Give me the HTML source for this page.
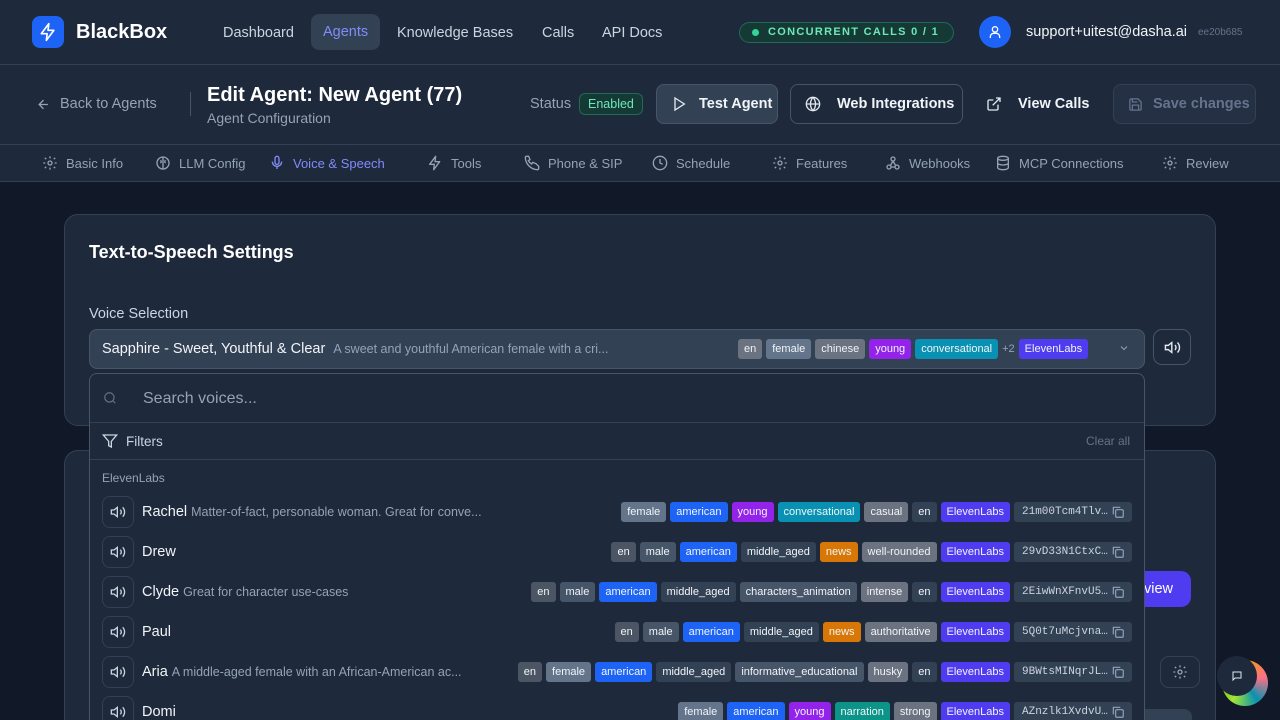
<!DOCTYPE html>
<html><head><meta charset="utf-8"><style>
*{box-sizing:border-box;margin:0;padding:0}
html,body{width:1280px;height:720px;overflow:hidden}
body{background:#111827;font-family:"Liberation Sans",sans-serif;color:#e2e8f0;position:relative}
.abs{position:absolute}
svg{display:block;flex-shrink:0}
.hdr{left:0;top:0;width:1280px;height:65px;background:#1e293b;border-bottom:1px solid #334155}
.sub{left:0;top:65px;width:1280px;height:80px;background:#1e293b;border-bottom:1px solid #334155}
.tabs{left:0;top:145px;width:1280px;height:37px;background:#1e293b;border-bottom:1px solid #334155}
.nav{top:14px;height:36px;line-height:36px;font-size:14.5px;color:#cbd5e1;padding:0 12px;border-radius:8px}
.tab{top:155px;font-size:13px;color:#94a3b8;display:flex;align-items:center;gap:8px;height:16px;white-space:nowrap}
.tab svg{width:16px;height:16px}
.btn{top:84px;height:40px;border-radius:8px;display:flex;align-items:center;gap:12px;font-size:14.5px;font-weight:bold;color:#f1f5f9;padding:0 14px;white-space:nowrap}
.card{background:#1e293b;border:1px solid #334155;border-radius:14px}
.tag{display:inline-block;height:20px;line-height:20px;padding:0 6px;border-radius:3px;font-size:11px;color:#f1f5f9;white-space:nowrap}
.g1{background:#64748b}.g2{background:#6b7280}.g3{background:#4b5563}.g4{background:#334155}.g5{background:#475569}
.am{background:#1d63f5}.yo{background:#9322ea}.co{background:#0891b2}.el{background:#4f3bf0}.nw{background:#d97706}.na{background:#0d9488}
.id{background:#334155;color:#cbd5e1;font-family:"Liberation Mono",monospace;font-size:11px;width:118px;height:20px;border-radius:3px;display:flex;align-items:center;padding-left:8px;gap:3px}
.row{left:90px;width:1054px;height:40px}
.spk{position:absolute;left:12px;top:4px;width:32px;height:32px;border:1px solid #334155;border-radius:8px;display:flex;align-items:center;justify-content:center}
.nm{position:absolute;left:52px;top:12px;font-size:14.5px;color:#f1f5f9;white-space:nowrap}
.nm span{font-size:12.5px;color:#94a3b8;margin-left:4px}
.tg{position:absolute;right:12px;top:10px;display:flex;gap:4px}
</style></head><body>
<div class="abs hdr"></div>
<div class="abs" style="left:32px;top:16px;width:32px;height:32px;border-radius:8px;background:#1d63f5;display:flex;align-items:center;justify-content:center"><svg width="20" height="20" viewBox="0 0 24 24" fill="none" stroke="#fff" stroke-width="2" stroke-linejoin="round"><path d="M13 2 4 14h7l-1 8 9-12h-7l1-8z"/></svg></div>
<div class="abs" style="left:76px;top:21px;font-size:20px;font-weight:bold;color:#fff">BlackBox</div>
<div class="abs nav" style="left:211px;top:15px">Dashboard</div>
<div class="abs nav" style="left:311px;top:14px;background:#334155;color:#818cf8">Agents</div>
<div class="abs nav" style="left:385px;top:15px">Knowledge Bases</div>
<div class="abs nav" style="left:530px;top:15px">Calls</div>
<div class="abs nav" style="left:590px;top:15px">API Docs</div>
<div class="abs" style="left:739px;top:22px;width:215px;height:21px;border-radius:11px;background:#153a36;border:1px solid #1f6b54;font-size:11px;letter-spacing:1.3px;color:#6ee7b7;line-height:19px;padding-left:28px;font-weight:bold;white-space:nowrap">CONCURRENT CALLS 0 / 1</div>
<div class="abs" style="left:752px;top:29px;width:7px;height:7px;border-radius:50%;background:#34d399"></div>
<div class="abs" style="left:979px;top:16px;width:32px;height:32px;border-radius:50%;background:#1d63f5;display:flex;align-items:center;justify-content:center"><svg width="16" height="16" viewBox="0 0 24 24" fill="none" stroke="#fff" stroke-width="2"><circle cx="12" cy="8" r="4"/><path d="M5 21v-2a5 5 0 0 1 5-5h4a5 5 0 0 1 5 5v2"/></svg></div>
<div class="abs" style="left:1026px;top:24px;font-size:14.5px;color:#f1f5f9">support+uitest@dasha.ai</div>
<div class="abs" style="left:1198px;top:27px;font-size:10px;color:#64748b">ee20b685</div>

<div class="abs sub"></div>
<div class="abs" style="left:36px;top:96px;display:flex;align-items:center;gap:9px;font-size:14.5px;color:#94a3b8"><svg width="15" height="15" viewBox="0 0 24 24" fill="none" stroke="#94a3b8" stroke-width="2"><path d="M19 12H5M12 19l-7-7 7-7"/></svg>Back to Agents</div>
<div class="abs" style="left:190px;top:92px;width:1px;height:24px;background:#475569"></div>
<div class="abs" style="left:207px;top:84px;font-size:20px;font-weight:bold;color:#fff">Edit Agent: New Agent (77)</div>
<div class="abs" style="left:207px;top:110px;font-size:14px;color:#94a3b8">Agent Configuration</div>
<div class="abs" style="left:530px;top:96px;font-size:14.5px;color:#94a3b8">Status</div>
<div class="abs" style="left:579px;top:93px;height:22px;line-height:20px;padding:0 8px;border-radius:6px;background:#153a36;border:1px solid #1f6b54;color:#6ee7b7;font-size:12.5px">Enabled</div>
<div class="abs btn" style="left:656px;width:122px;background:#334155;border:1px solid #475569"><svg width="16" height="16" viewBox="0 0 24 24" fill="none" stroke="#e2e8f0" stroke-width="2"><path d="M6 3l14 9-14 9z"/></svg>Test Agent</div>
<div class="abs btn" style="left:790px;width:173px;border:1px solid #475569;gap:16px"><svg width="16" height="16" viewBox="0 0 24 24" fill="none" stroke="#e2e8f0" stroke-width="2"><circle cx="12" cy="12" r="10"/><path d="M2 12h20M12 2a15 15 0 0 1 0 20M12 2a15 15 0 0 0 0 20"/></svg>Web Integrations</div>
<div class="abs btn" style="left:972px;gap:16px"><svg width="16" height="16" viewBox="0 0 24 24" fill="none" stroke="#e2e8f0" stroke-width="2"><path d="M18 13v6a2 2 0 0 1-2 2H5a2 2 0 0 1-2-2V8a2 2 0 0 1 2-2h6M15 3h6v6M10 14 21 3"/></svg>View Calls</div>
<div class="abs btn" style="left:1113px;width:143px;border:1px solid #334155;background:#243044;color:#64748b;gap:10px"><svg width="15" height="15" viewBox="0 0 24 24" fill="none" stroke="#64748b" stroke-width="2"><path d="M19 21H5a2 2 0 0 1-2-2V5a2 2 0 0 1 2-2h11l5 5v11a2 2 0 0 1-2 2z"/><path d="M17 21v-8H7v8M7 3v5h8"/></svg>Save changes</div>

<div class="abs tabs"></div>
<div class="abs tab" style="left:42px"><svg viewBox="0 0 24 24" fill="none" stroke="#94a3b8" stroke-width="2"><circle cx="12" cy="12" r="3"/><path d="M12 2v3M12 19v3M4.2 4.2l2.1 2.1M17.7 17.7l2.1 2.1M2 12h3M19 12h3M4.2 19.8l2.1-2.1M17.7 6.3l2.1-2.1"/></svg>Basic Info</div>
<div class="abs tab" style="left:155px"><svg viewBox="0 0 24 24" fill="none" stroke="#94a3b8" stroke-width="2"><circle cx="12" cy="12" r="9"/><path d="M12 3v18M8 8c2 1 2 3 0 4M16 8c-2 1-2 3 0 4"/></svg>LLM Config</div>
<div class="abs tab" style="left:269px;color:#818cf8"><svg viewBox="0 0 24 24" fill="none" stroke="#818cf8" stroke-width="2"><rect x="9" y="2" width="6" height="12" rx="3"/><path d="M5 10a7 7 0 0 0 14 0M12 17v4"/></svg>Voice &amp; Speech</div>
<div class="abs tab" style="left:427px"><svg viewBox="0 0 24 24" fill="none" stroke="#94a3b8" stroke-width="2" stroke-linejoin="round"><path d="M13 2 4 14h7l-1 8 9-12h-7l1-8z"/></svg>Tools</div>
<div class="abs tab" style="left:524px"><svg viewBox="0 0 24 24" fill="none" stroke="#94a3b8" stroke-width="2"><path d="M22 17v3a2 2 0 0 1-2 2A19 19 0 0 1 2 4a2 2 0 0 1 2-2h3l2 5-2.5 1.5a11 11 0 0 0 5 5L13 11l5 2z"/></svg>Phone &amp; SIP</div>
<div class="abs tab" style="left:652px"><svg viewBox="0 0 24 24" fill="none" stroke="#94a3b8" stroke-width="2"><circle cx="12" cy="12" r="10"/><path d="M12 6v6l4 2"/></svg>Schedule</div>
<div class="abs tab" style="left:772px"><svg viewBox="0 0 24 24" fill="none" stroke="#94a3b8" stroke-width="2"><circle cx="12" cy="12" r="3"/><path d="M12 2v3M12 19v3M4.2 4.2l2.1 2.1M17.7 17.7l2.1 2.1M2 12h3M19 12h3M4.2 19.8l2.1-2.1M17.7 6.3l2.1-2.1"/></svg>Features</div>
<div class="abs tab" style="left:885px"><svg viewBox="0 0 24 24" fill="none" stroke="#94a3b8" stroke-width="2"><circle cx="6" cy="18" r="3"/><circle cx="18" cy="18" r="3"/><circle cx="12" cy="6" r="3"/><path d="M12 9l-4 7M9 18h6M12 9l4 7"/></svg>Webhooks</div>
<div class="abs tab" style="left:995px"><svg viewBox="0 0 24 24" fill="none" stroke="#94a3b8" stroke-width="2"><ellipse cx="12" cy="5" rx="8" ry="3"/><path d="M4 5v14c0 1.7 3.6 3 8 3s8-1.3 8-3V5M4 12c0 1.7 3.6 3 8 3s8-1.3 8-3"/></svg>MCP Connections</div>
<div class="abs tab" style="left:1162px"><svg viewBox="0 0 24 24" fill="none" stroke="#94a3b8" stroke-width="2"><circle cx="12" cy="12" r="3"/><path d="M12 2v3M12 19v3M4.2 4.2l2.1 2.1M17.7 17.7l2.1 2.1M2 12h3M19 12h3M4.2 19.8l2.1-2.1M17.7 6.3l2.1-2.1"/></svg>Review</div>

<div class="abs card" style="left:64px;top:214px;width:1152px;height:212px"></div>
<div class="abs card" style="left:64px;top:450px;width:1152px;height:300px"></div>
<div class="abs" style="left:1120px;top:571px;width:71px;height:36px;border-radius:10px;background:#4f3bf0;color:#fff;font-size:14.5px;line-height:36px;padding-left:24px">view</div>
<div class="abs" style="left:1160px;top:656px;width:40px;height:32px;border:1px solid #334155;border-radius:9px;display:flex;align-items:center;justify-content:center"><svg width="16" height="16" viewBox="0 0 24 24" fill="none" stroke="#94a3b8" stroke-width="2"><circle cx="12" cy="12" r="3"/><path d="M12 2v3M12 19v3M4.2 4.2l2.1 2.1M17.7 17.7l2.1 2.1M2 12h3M19 12h3M4.2 19.8l2.1-2.1M17.7 6.3l2.1-2.1"/></svg></div>
<div class="abs" style="left:1122px;top:709px;width:70px;height:20px;border-radius:8px;background:#334155"></div>
<div class="abs" style="left:1222px;top:660px;width:46px;height:46px;border-radius:50%;background:conic-gradient(#f59e0b,#fb7185,#0891b2,#a3e635,#65a30d,#f59e0b)"></div>
<div class="abs" style="left:1217px;top:656px;width:40px;height:40px;border-radius:50%;background:#1e293b;display:flex;align-items:center;justify-content:center"><svg width="12" height="12" viewBox="0 0 24 24" fill="none" stroke="#e2e8f0" stroke-width="2"><path d="M4 4h16v12H8l-4 4z"/></svg></div>

<div class="abs" style="left:89px;top:242px;font-size:18px;font-weight:bold;color:#fff">Text-to-Speech Settings</div>
<div class="abs" style="left:89px;top:306px;font-size:14.5px;color:#cbd5e1">Voice Selection</div>
<div class="abs" style="left:89px;top:329px;width:1056px;height:40px;border-radius:8px;background:#334155;border:1px solid #475569"></div>
<div class="abs" style="left:102px;top:341px;font-size:14.5px;color:#f1f5f9;white-space:nowrap">Sapphire - Sweet, Youthful &amp; Clear <span style="font-size:12.5px;color:#94a3b8;margin-left:4px">A sweet and youthful American female with a cri...</span></div>
<div class="abs" style="left:738px;top:339px;display:flex;gap:4px;align-items:center"><span class="tag g2">en</span><span class="tag g1">female</span><span class="tag g2">chinese</span><span class="tag yo">young</span><span class="tag co">conversational</span><span style="font-size:11px;color:#94a3b8">+2</span><span class="tag el">ElevenLabs</span></div>
<div class="abs" style="left:1118px;top:342px"><svg width="12" height="12" viewBox="0 0 24 24" fill="none" stroke="#94a3b8" stroke-width="2"><path d="M6 9l6 6 6-6"/></svg></div>
<div class="abs" style="left:1153px;top:329px;width:38px;height:36px;border:1px solid #475569;border-radius:9px;display:flex;align-items:center;justify-content:center"><svg width="17" height="17" viewBox="0 0 24 24" fill="none" stroke="#e2e8f0" stroke-width="2"><path d="M11 5 6 9H2v6h4l5 4z"/><path d="M15.5 8.5a5 5 0 0 1 0 7M19 5a10 10 0 0 1 0 14"/></svg></div>

<div class="abs" style="left:89px;top:373px;width:1056px;height:380px;border-radius:8px;background:#1e293b;border:1px solid #475569"></div>
<div class="abs" style="left:103px;top:391px"><svg width="14" height="14" viewBox="0 0 24 24" fill="none" stroke="#64748b" stroke-width="2"><circle cx="11" cy="11" r="8"/><path d="M21 21l-4.3-4.3"/></svg></div>
<div class="abs" style="left:143px;top:390px;font-size:16px;color:#94a3b8">Search voices...</div>
<div class="abs" style="left:90px;top:422px;width:1054px;height:1px;background:#334155"></div>
<div class="abs" style="left:102px;top:433px;display:flex;align-items:center;gap:8px;font-size:13.5px;color:#cbd5e1"><svg width="16" height="16" viewBox="0 0 24 24" fill="none" stroke="#cbd5e1" stroke-width="2"><path d="M22 3H2l8 9.5V19l4 2v-8.5z"/></svg>Filters</div>
<div class="abs" style="left:1086px;top:434px;font-size:12px;color:#64748b">Clear all</div>
<div class="abs" style="left:90px;top:459px;width:1054px;height:1px;background:#334155"></div>
<div class="abs" style="left:102px;top:471px;font-size:12px;color:#94a3b8">ElevenLabs</div>

<div class="abs row" style="top:492px"><div class="spk"><svg width="16" height="16" viewBox="0 0 24 24" fill="none" stroke="#cbd5e1" stroke-width="2"><path d="M11 5 6 9H2v6h4l5 4z"/><path d="M15.5 8.5a5 5 0 0 1 0 7M19 5a10 10 0 0 1 0 14"/></svg></div><div class="nm">Rachel<span>Matter-of-fact, personable woman. Great for conve...</span></div><div class="tg"><span class="tag g1">female</span><span class="tag am">american</span><span class="tag yo">young</span><span class="tag co">conversational</span><span class="tag g2">casual</span><span class="tag g4">en</span><span class="tag el">ElevenLabs</span><div class="id">21m00Tcm4Tlv…<svg width="14" height="14" viewBox="0 0 24 24" fill="none" stroke="#94a3b8" stroke-width="2"><rect x="8" y="8" width="13" height="13" rx="2"/><path d="M4 16V4h12"/></svg></div></div></div>
<div class="abs row" style="top:532px"><div class="spk"><svg width="16" height="16" viewBox="0 0 24 24" fill="none" stroke="#cbd5e1" stroke-width="2"><path d="M11 5 6 9H2v6h4l5 4z"/><path d="M15.5 8.5a5 5 0 0 1 0 7M19 5a10 10 0 0 1 0 14"/></svg></div><div class="nm">Drew</div><div class="tg"><span class="tag g3">en</span><span class="tag g5">male</span><span class="tag am">american</span><span class="tag g4">middle_aged</span><span class="tag nw">news</span><span class="tag g2">well-rounded</span><span class="tag el">ElevenLabs</span><div class="id">29vD33N1CtxC…<svg width="14" height="14" viewBox="0 0 24 24" fill="none" stroke="#94a3b8" stroke-width="2"><rect x="8" y="8" width="13" height="13" rx="2"/><path d="M4 16V4h12"/></svg></div></div></div>
<div class="abs row" style="top:572px"><div class="spk"><svg width="16" height="16" viewBox="0 0 24 24" fill="none" stroke="#cbd5e1" stroke-width="2"><path d="M11 5 6 9H2v6h4l5 4z"/><path d="M15.5 8.5a5 5 0 0 1 0 7M19 5a10 10 0 0 1 0 14"/></svg></div><div class="nm">Clyde<span>Great for character use-cases</span></div><div class="tg"><span class="tag g3">en</span><span class="tag g5">male</span><span class="tag am">american</span><span class="tag g4">middle_aged</span><span class="tag g5">characters_animation</span><span class="tag g2">intense</span><span class="tag g4">en</span><span class="tag el">ElevenLabs</span><div class="id">2EiwWnXFnvU5…<svg width="14" height="14" viewBox="0 0 24 24" fill="none" stroke="#94a3b8" stroke-width="2"><rect x="8" y="8" width="13" height="13" rx="2"/><path d="M4 16V4h12"/></svg></div></div></div>
<div class="abs row" style="top:612px"><div class="spk"><svg width="16" height="16" viewBox="0 0 24 24" fill="none" stroke="#cbd5e1" stroke-width="2"><path d="M11 5 6 9H2v6h4l5 4z"/><path d="M15.5 8.5a5 5 0 0 1 0 7M19 5a10 10 0 0 1 0 14"/></svg></div><div class="nm">Paul</div><div class="tg"><span class="tag g3">en</span><span class="tag g5">male</span><span class="tag am">american</span><span class="tag g4">middle_aged</span><span class="tag nw">news</span><span class="tag g2">authoritative</span><span class="tag el">ElevenLabs</span><div class="id">5Q0t7uMcjvna…<svg width="14" height="14" viewBox="0 0 24 24" fill="none" stroke="#94a3b8" stroke-width="2"><rect x="8" y="8" width="13" height="13" rx="2"/><path d="M4 16V4h12"/></svg></div></div></div>
<div class="abs row" style="top:652px"><div class="spk"><svg width="16" height="16" viewBox="0 0 24 24" fill="none" stroke="#cbd5e1" stroke-width="2"><path d="M11 5 6 9H2v6h4l5 4z"/><path d="M15.5 8.5a5 5 0 0 1 0 7M19 5a10 10 0 0 1 0 14"/></svg></div><div class="nm">Aria<span>A middle-aged female with an African-American ac...</span></div><div class="tg"><span class="tag g3">en</span><span class="tag g1">female</span><span class="tag am">american</span><span class="tag g4">middle_aged</span><span class="tag g5">informative_educational</span><span class="tag g2">husky</span><span class="tag g4">en</span><span class="tag el">ElevenLabs</span><div class="id">9BWtsMINqrJL…<svg width="14" height="14" viewBox="0 0 24 24" fill="none" stroke="#94a3b8" stroke-width="2"><rect x="8" y="8" width="13" height="13" rx="2"/><path d="M4 16V4h12"/></svg></div></div></div>
<div class="abs row" style="top:692px"><div class="spk"><svg width="16" height="16" viewBox="0 0 24 24" fill="none" stroke="#cbd5e1" stroke-width="2"><path d="M11 5 6 9H2v6h4l5 4z"/><path d="M15.5 8.5a5 5 0 0 1 0 7M19 5a10 10 0 0 1 0 14"/></svg></div><div class="nm">Domi</div><div class="tg"><span class="tag g1">female</span><span class="tag am">american</span><span class="tag yo">young</span><span class="tag na">narration</span><span class="tag g2">strong</span><span class="tag el">ElevenLabs</span><div class="id">AZnzlk1XvdvU…<svg width="14" height="14" viewBox="0 0 24 24" fill="none" stroke="#94a3b8" stroke-width="2"><rect x="8" y="8" width="13" height="13" rx="2"/><path d="M4 16V4h12"/></svg></div></div></div>
</body></html>
